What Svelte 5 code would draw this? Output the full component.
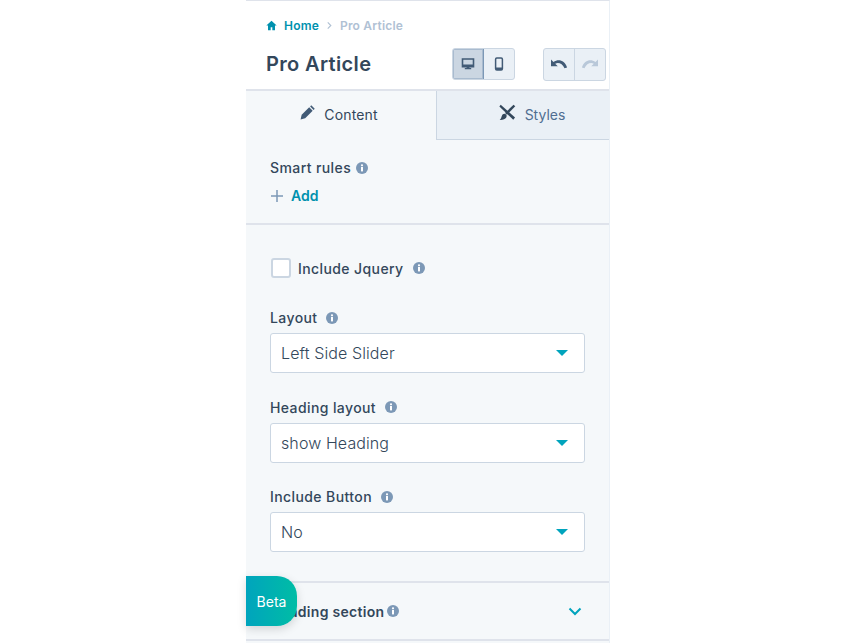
<script>
	const selects = [
		{ label: 'Layout', value: 'Left Side Slider' },
		{ label: 'Heading layout', value: 'show Heading' },
		{ label: 'Include Button', value: 'No' }
	]
</script>

{#snippet info()}
	<svg class="info" viewBox="0 0 12 12" width="12" height="12">
		<circle cx="6" cy="6" r="6" fill="#7c98b6" />
		<rect x="5" y="5" width="2" height="4.4" fill="#fff" />
		<circle cx="6" cy="3.3" r="1.1" fill="#fff" />
	</svg>
{/snippet}

<div class="page">
	<aside class="panel">
		<header class="head">
			<nav class="crumbs">
				<svg viewBox="0 0 12 12" width="11" height="11"><path d="M6 .8 .4 6h1.8v5.2h2.9V7.8h1.8v3.4h2.9V6h1.800z" fill="#0091ae" /></svg>
				<a href="#home">Home</a>
				<svg class="sep" viewBox="0 0 8 10" width="7" height="9"><path d="M2 1.500 5.500 5 2 8.500" fill="none" stroke="#b0c1d4" stroke-width="1.300" /></svg>
				<span>Pro Article</span>
			</nav>
			<div class="title-row">
				<h1>Pro Article</h1>
				<div class="group view">
					<button class="on" aria-label="Desktop">
						<svg viewBox="0 0 14 14" width="14" height="14"><path d="M1.500 2h11v7.600h-11z" fill="none" stroke="#425b76" stroke-width="1.600" /><path d="M2 7.400h10v2H2zM5.600 9.500h2.800v1.600H5.600zM3.800 11h6.400v1.200H3.800z" fill="#425b76" /></svg>
					</button>
					<button aria-label="Mobile">
						<svg viewBox="0 0 14 14" width="14" height="14"><rect x="3.600" y="1" width="6.800" height="12" rx="1.200" fill="none" stroke="#425b76" stroke-width="1.500" /><path d="M4 10.600h6V13H4z" fill="#425b76" /></svg>
					</button>
				</div>
				<div class="group history">
					<button aria-label="Undo">
						<svg viewBox="0 0 18 14" width="18" height="14"><path d="M1 1.500v6.800h6.800L5.200 5.700c3.400-1.500 7.300-.1 9.300 4.600l2.600-.9C14.800 2.600 8.800.4 3.500 3.900z" fill="#425b76" /></svg>
					</button>
					<button aria-label="Redo">
						<svg viewBox="0 0 18 14" width="18" height="14"><path d="M17 1.500v6.800h-6.800l2.600-2.600C9.400 4.200 5.500 5.600 3.500 10.300L.9 9.400C3.200 2.600 9.200.4 14.500 3.900z" fill="#b9c8d9" /></svg>
					</button>
				</div>
			</div>
		</header>

		<div class="tabs">
			<div class="tab active">
				<svg viewBox="0 0 16 16" width="15" height="15"><path d="M.6 15.400 1.800 10.500 9.800 2.500 13.500 6.200 5.500 14.200z" fill="#425b76" /><path d="M10.800 1.500 12 .3 15.700 4 14.500 5.200z" fill="#425b76" /></svg>
				Content
			</div>
			<div class="tab styles">
				<svg viewBox="0 0 18 18" width="17" height="17">
					<path d="M1.800.8 17 14.400l-1.900 2.300L.4 2.600z" fill="#33475b" />
					<path d="M15.400.8 17.200 2.400 8.400 11.400 6.400 9.400z" fill="#33475b" />
					<path d="M5.800 10.400c2 .2 3 2 1.900 3.800-1.100 1.800-3.700 2.800-7 2.600 1.700-1.300 1.700-2.900 2.400-4.400.6-1.300 1.500-2.100 2.700-2z" fill="#33475b" />
				</svg>
				<span>Styles</span>
			</div>
		</div>

		<section class="rules">
			<div class="label">Smart rules {@render info()}</div>
			<div class="add">
				<svg viewBox="0 0 12 12" width="12" height="12"><path d="M6 0v12M0 6h12" stroke="#7c98b6" stroke-width="1.500" /></svg>
				<a href="#add">Add</a>
			</div>
		</section>

		<section class="fields">
			<div class="check-row">
				<span class="box"></span>
				<span class="label">Include Jquery</span>
				{@render info()}
			</div>
			{#each selects as s}
				<div class="field">
					<div class="label">{s.label} {@render info()}</div>
					<div class="select">
						<span>{s.value}</span>
						<i class="caret"></i>
					</div>
				</div>
			{/each}
		</section>

		<section class="accordion">
			<div class="label">Heading section {@render info()}</div>
			<svg viewBox="0 0 14 9" width="14" height="9"><path d="M1.500 1.500 7 7l5.500-5.500" fill="none" stroke="#00a4bd" stroke-width="2" /></svg>
		</section>

		<div class="beta">Beta</div>
	</aside>
</div>

<style>
	:global(body) {
		background: #fff;
	}

	.page {
		height: 643px;
		overflow: hidden;
		padding-left: 246px;
		font-family: Inter, "Noto Sans", sans-serif;
		color: #33475b;
	}

	.panel {
		position: relative;
		width: 364px;
		height: 643px;
		box-sizing: border-box;
		border-top: 1px solid #dfe3eb;
		border-right: 1px solid #eaf0f6;
		background: #f5f8fa;
	}

	.head {
		height: 90px;
		box-sizing: border-box;
		padding: 17px 0 0 20px;
		background: #fff;
		border-bottom: 2px solid #dfe3eb;
	}

	.crumbs {
		display: flex;
		align-items: center;
		gap: 7px;
		height: 14px;
		font-size: 12px;
		font-weight: 600;
		letter-spacing: 0.2px;
		color: #b0c1d4;
	}

	.crumbs a {
		color: #0091ae;
		text-decoration: none;
	}

	.title-row {
		display: flex;
		align-items: center;
		margin-top: 15px;
	}

	h1 {
		margin: 0;
		width: 186px;
		font-size: 20px;
		font-weight: 600;
		letter-spacing: 0.35px;
		color: #33475b;
	}

	.group {
		display: flex;
		height: 32px;
		box-sizing: border-box;
		border: 1px solid #cbd6e2;
		border-radius: 3px;
		background: #eaf0f6;
		overflow: hidden;
	}

	.group button {
		display: flex;
		align-items: center;
		justify-content: center;
		padding: 0;
		border: 0;
		background: none;
	}

	.view {
		width: 63px;
	}

	.view button {
		width: 31px;
	}

	.view .on {
		width: 32px;
		background: #cbd6e2;
		border-right: 1px solid #7c98b6;
		box-shadow: inset 0 0 0 1px #a9bbcf;
	}

	.history {
		width: 63px;
		margin: 1px 0 0 28px;
		height: 33px;
	}

	.history button {
		width: 31px;
	}

	.history button + button {
		border-left: 1px solid #cbd6e2;
	}

	.tabs {
		display: flex;
		height: 49px;
	}

	.tab {
		display: flex;
		align-items: center;
		justify-content: center;
		gap: 9px;
		flex: 1;
		font-size: 14px;
		color: #506e91;
		background: #eaf0f6;
		border-bottom: 1px solid #cbd6e2;
		padding-bottom: 2px;
		box-sizing: border-box;
	}

	.tab svg {
		margin-top: -4px;
	}

	.styles {
		padding-left: 18px;
	}

	.tab.active {
		flex: 0 0 191px;
		padding-right: 4px;
		letter-spacing: 0.15px;
		color: #33475b;
		background: #f5f8fa;
		border-right: 1px solid #cbd6e2;
		border-bottom: 0;
	}

	.label {
		display: flex;
		align-items: center;
		gap: 5px;
		font-size: 14px;
		font-weight: 500;
		letter-spacing: 0.4px;
		color: #33475b;
	}

	.info {
		flex: none;
	}

	.rules {
		height: 85px;
		box-sizing: border-box;
		padding: 19px 24px 0;
		border-bottom: 2px solid #dfe3eb;
	}

	.add {
		display: flex;
		align-items: center;
		gap: 8px;
		margin: 11px 0 0 1px;
		font-size: 14px;
		font-weight: 600;
	}

	.add a {
		color: #0091ae;
		text-decoration: none;
	}

	.fields {
		height: 358px;
		box-sizing: border-box;
		padding: 32px 24px 0;
		border-bottom: 2px solid #dfe3eb;
	}

	.check-row {
		display: flex;
		align-items: center;
		height: 22px;
		margin: 0 0 30px 1px;
	}

	.box {
		width: 20px;
		height: 20px;
		box-sizing: border-box;
		background: #fff;
		border: 2px solid #cbd6e2;
		border-radius: 3px;
		margin-right: 7px;
	}

	.check-row .label {
		margin-right: 9px;
	}

	.field {
		margin-bottom: 25.5px;
	}

	.field .label {
		gap: 9px;
		height: 17px;
	}

	.select {
		display: flex;
		align-items: center;
		justify-content: space-between;
		height: 40px;
		margin-top: 7px;
		padding: 0 16px 0 10px;
		box-sizing: border-box;
		background: #fff;
		border: 1px solid #cbd6e2;
		border-radius: 3px;
		font-size: 16px;
		font-weight: 300;
		letter-spacing: 0.1px;
		color: #33475b;
	}

	.caret {
		width: 0;
		height: 0;
		border-left: 6px solid transparent;
		border-right: 6px solid transparent;
		border-top: 6px solid #00a4bd;
	}

	.accordion {
		display: flex;
		align-items: center;
		justify-content: space-between;
		height: 58px;
		box-sizing: border-box;
		padding: 0 27px 0 24px;
		border-bottom: 2px solid #dfe3eb;
	}

	.accordion .label {
		gap: 3px;
		font-weight: 600;
		letter-spacing: 0.3px;
	}

	.beta {
		position: absolute;
		left: 0;
		top: 575px;
		width: 51px;
		height: 50px;
		display: flex;
		align-items: center;
		justify-content: center;
		border-radius: 0 20px 20px 0;
		background: linear-gradient(90deg, #00a4bd, #00bda5);
		box-shadow: 0 3px 10px rgba(0, 0, 0, 0.15);
		color: #fff;
		font-size: 14px;
	}
</style>
